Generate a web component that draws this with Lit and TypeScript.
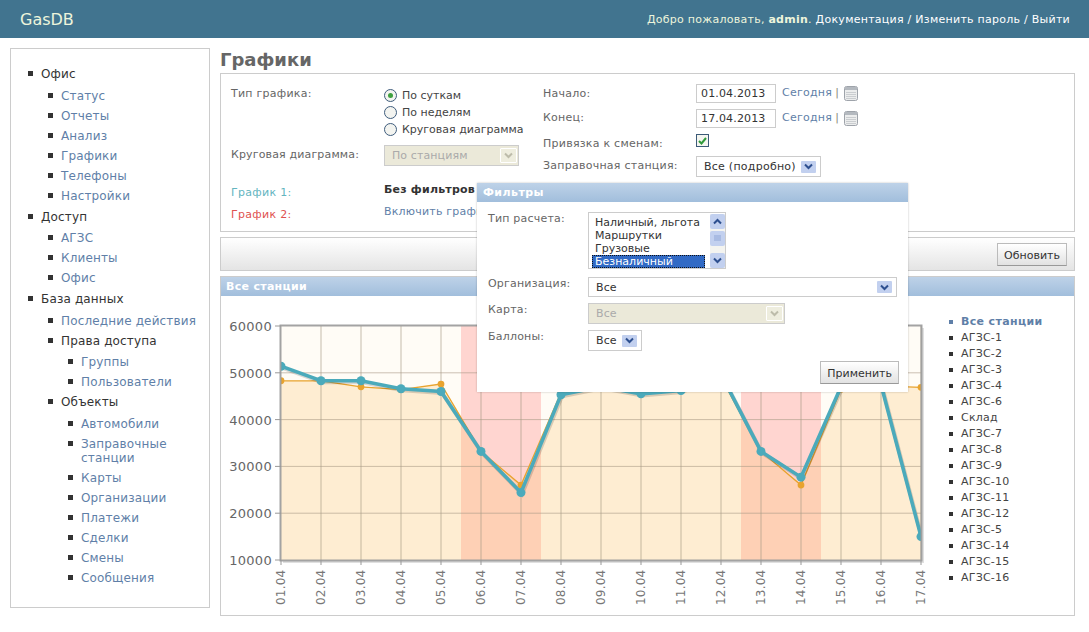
import { LitElement, html, css, svg } from "lit";
import { customElement } from "lit/decorators.js";

const X0 = 281, DX = 40, YT = 326, YB = 560;
const px = (i: number) => X0 + i * DX;
const py = (v: number) => YB - ((v - 10000) / 50000) * (YB - YT);
const teal = [51400, 48300, 48300, 46600, 46000, 33200, 24400, 45300, 47000, 45500, 46200, 49700, 33200, 27700, 47000, 47500, 15000];
const orange = [48300, 48300, 47000, 46400, 47600, 33200, 26000, 45800, 47000, 45800, 46200, 49000, 33200, 26000, 46500, 47200, 46900];
const dates = Array.from({ length: 17 }, (_, i) => String(i + 1).padStart(2, "0") + ".04");
const pts = (a: number[]) => a.map((v, i) => `${px(i)},${py(v).toFixed(1)}`).join(" ");

const ArrowBtn = (disabled = false) => html`<span class="arrow ${disabled ? "off" : ""}"><svg width="9" height="7" viewBox="0 0 9 7"><path d="M1 1.5 L4.5 5 L8 1.5" fill="none" stroke="${disabled ? "#bdbcaa" : "#2d4f8f"}" stroke-width="2"/></svg></span>`;
const Cal = () => html`<svg class="cal" width="14" height="15" viewBox="0 0 14 15"><rect x=".5" y=".5" width="13" height="14" rx="2" fill="#eceded" stroke="#9ea3aa"/><rect x="1" y="1" width="12" height="3" fill="#b4b9bf"/><path d="M2.5 6.5h9M2.5 8.5h9M2.5 10.5h9M2.5 12.5h9" stroke="#a9adb3" stroke-dasharray="1 1"/></svg>`;

@customElement("app-root")
export class AppRoot extends LitElement {
  static styles = css`
    :host { display: block; width: 1089px; height: 632px; position: relative; overflow: hidden; background: #fff; font: 11px "DejaVu Sans", sans-serif; color: #666; }
    a { color: #5f7fa8; text-decoration: none; }
    .top { height: 38px; background: #41748f; display: flex; justify-content: space-between; align-items: center; padding: 0 19px 0 20px; color: #edf5dc; }
    .logo { font-size: 16px; }
    .welcome { font-size: 11px; letter-spacing: .26px; }
    .welcome span { color: #fff; }
    .page { display: flex; align-items: flex-start; gap: 10px; padding: 10px 14px 0 10px; }
    .side { width: 198px; height: 558px; border: 1px solid #ccc; flex: none; font-size: 12px; letter-spacing: .15px; }
    ul { list-style: none; margin: 0; padding: 0; }
    .side > ul { padding: 16px 0 0 30px; }
    .side li { line-height: 18px; color: #333; position: relative; }
    .side li::before { content: ""; position: absolute; left: -13px; top: 6px; width: 5px; height: 5px; background: #333; }
    .side li > ul { padding: 3.6px 0 0 20px; }
    .side li li { margin-bottom: 2px; }
    .side li.g { margin-bottom: 3px; }
    .side li.multi { line-height: 14px; padding: 2px 0; }
    .side span { color: #333; }
    .main { flex: 1; min-width: 0; }
    h1 { font-size: 18px; line-height: 24px; margin: 0 0 1px; color: #666; font-weight: bold; }
    .box { border: 1px solid #ccc; }
    .form { height: 157px; display: grid; grid-template-columns: 153px 159px 153px 1fr; padding: 0 0 0 10px; position: relative; }
    .c1 { padding-top: 13px; line-height: 14px; letter-spacing: .25px; }
    .c2 { padding-top: 13px; display: flex; flex-direction: column; }
    .c3 { padding-top: 13px; display: flex; flex-direction: column; line-height: 14px; letter-spacing: .25px; }
    .c3 div:nth-child(2) { margin-top: 10px; }
    .c3 div:nth-child(3) { margin-top: 12px; }
    .c3 div:nth-child(4) { margin-top: 8px; }
    .c4 { padding-top: 10px; display: flex; flex-direction: column; gap: 6px; }
    .radio { display: flex; align-items: center; gap: 5px; height: 17px; color: #444; }
    .radio i { width: 11px; height: 11px; border: 1px solid #3f5d7d; border-radius: 50%; background: #f3f4f0; display: flex; align-items: center; justify-content: center; }
    .radio i b { width: 5px; height: 5px; border-radius: 50%; background: #3fa03f; }
    .sel { display: inline-flex; align-items: center; justify-content: space-between; box-sizing: border-box; border: 1px solid #ccc; background: #fff; height: 21px; padding: 0 4px 0 7px; color: #333; letter-spacing: .1px; }
    .sel.off { background: #ebe9d9; color: #aaa; }
    .w125 { width: 125px; margin-top: 3px; letter-spacing: .25px; }
    .w135 { width: 135px; }
    .w309 { width: 309px; height: 20px; }
    .w197 { width: 197px; }
    .w54 { width: 54px; }
    .arrow { width: 15px; height: 12px; background: #c2d0ef; display: flex; align-items: center; justify-content: center; border-radius: 1px; }
    .arrow.off { width: 17px; height: 15px; margin-right: -3px; background: #eeedde; border: 1px solid #fff; box-sizing: border-box; }
    .inp { display: inline-block; box-sizing: border-box; width: 80px; height: 19px; border: 1px solid #ccc; padding-left: 4px; color: #333; line-height: 18px; letter-spacing: .15px; }
    .today { letter-spacing: .25px; margin: 0 0 2px 0; }
    .dr { display: flex; align-items: center; gap: 6px; height: 19px; color: #8a8a7a; }
    .pipe { margin: 0 -1px 2px -3px; }
    .cal { margin-bottom: 1px; }
    .check { width: 11px; height: 11px; border: 1px solid #3c5a78; background: #f4f5ef; display: flex; align-items: center; justify-content: center; }
    .bar { height: 32px; margin-top: 5px; background: linear-gradient(#fff, #e4e4e4); display: flex; align-items: center; justify-content: flex-end; padding-right: 7px; }
    .btn { box-sizing: border-box; height: 23px; padding: 0 6px; border: 1px solid #bbb; border-bottom-color: #999; background: linear-gradient(#fff, #e2e2e2); color: #333; line-height: 23px; }
    .chart { margin-top: 5px; height: 338px; display: flex; flex-direction: column; }
    .head { height: 19px; line-height: 20px; padding-left: 5px; background: linear-gradient(#bed2e8, #a1bedc); color: #fff; font-weight: bold; letter-spacing: .3px; flex: none; }
    .legend { position: absolute; left: 961px; top: 314px; color: #444; letter-spacing: .2px; }
    .legend li { line-height: 16px; position: relative; }
    .legend li::before { content: ""; position: absolute; left: -12px; top: 6px; width: 4px; height: 4px; background: #333; }
    .legend li.on { font-weight: bold; color: #5f7fa8; letter-spacing: .35px; }
    .legend li.on::before { background: #5f7fa8; }
    .plot { position: absolute; left: 0; top: 0; pointer-events: none; }
    .modal { position: absolute; left: 477px; top: 183px; width: 431px; height: 209px; background: #fff; box-shadow: 0 0 2px rgba(0,0,0,.25); display: flex; flex-direction: column; }
    .modal .head { padding-left: 6px; letter-spacing: .45px; }
    .mbody { display: grid; grid-template-columns: 100px 1fr; padding: 10px 11px 0 11px; position: relative; flex: 1; align-content: start; justify-items: start; }
    .ml { letter-spacing: .2px; }
    .lb { width: 138px; height: 57px; border: 1px solid #ccc; box-sizing: border-box; display: flex; padding: 3px 0 1px 3px; color: #333; line-height: 13px; margin-bottom: 8px; }
    .opts { width: 113px; margin-top: 0; }
    .o { padding-left: 3px; height: 13px; white-space: nowrap; }
    .o.s { background: #316ac5; color: #fff; outline: 1px dotted #111; outline-offset: -1px; }
    .sb { width: 15px; margin: -2px 0 -1px 5px; display: flex; flex-direction: column; background: #f4f4f0; }
    .th { height: 15px; background: #c2d0ef; display: flex; align-items: center; justify-content: center; border-radius: 2px; }
    .th.mid { margin: 2px 0 auto; }
    .mrow { margin-bottom: 6px; }
    .apply { position: absolute; right: 9px; bottom: 8px; }
    .f { position: absolute; white-space: nowrap; }
    .pie { left: 10px; top: 74px; letter-spacing: .15px; }
    .pies { left: 163px; top: 71px; }
    .g1 { left: 10px; top: 112px; color: #64b5bf; letter-spacing: .3px; }
    .nof { left: 163px; top: 109px; color: #333; font-weight: bold; letter-spacing: .2px; }
    .g2 { left: 10px; top: 134px; color: #e0514f; letter-spacing: .3px; }
    .on2 { left: 163px; top: 131px; letter-spacing: .2px; }
  `;

  render() {
    return html`
      <div class="top"><div class="logo">GasDB</div>
        <div class="welcome">Добро пожаловать, <b>admin</b>. <span>Документация / Изменить пароль / Выйти</span></div></div>
      <div class="page">
        <nav class="side"><ul>
          <li class="g"><span>Офис</span><ul>
            ${["Статус","Отчеты","Анализ","Графики","Телефоны","Настройки"].map(t=>html`<li><a href="#">${t}</a></li>`)}</ul></li>
          <li class="g"><span>Доступ</span><ul>
            ${["АГЗС","Клиенты","Офис"].map(t=>html`<li><a href="#">${t}</a></li>`)}</ul></li>
          <li class="g"><span>База данных</span><ul>
            <li><a href="#">Последние действия</a></li>
            <li><span>Права доступа</span><ul>
              ${["Группы","Пользователи"].map(t=>html`<li><a href="#">${t}</a></li>`)}</ul></li>
            <li><span>Объекты</span><ul>
              ${["Автомобили","Заправочные станции","Карты","Организации","Платежи","Сделки","Смены","Сообщения"].map(t=>html`<li class="multi"><a href="#">${t}</a></li>`)}</ul></li>
          </ul></li>
        </ul></nav>
        <main class="main">
          <h1>Графики</h1>
          <section class="box form">
            <div class="c1">Тип графика:</div>
            <div class="c2">
              <div class="radio"><i><b></b></i>По суткам</div>
              <div class="radio"><i></i>По неделям</div>
              <div class="radio"><i></i>Круговая диаграмма</div>
            </div>
            <div class="c3">
              <div>Начало:</div><div>Конец:</div><div>Привязка к сменам:</div><div>Заправочная станция:</div>
            </div>
            <div class="c4">
              <div class="dr"><span class="inp">01.04.2013</span><a class="today" href="#">Сегодня</a><span class="pipe">|</span>${Cal()}</div>
              <div class="dr"><span class="inp">17.04.2013</span><a class="today" href="#">Сегодня</a><span class="pipe">|</span>${Cal()}</div>
              <div class="check"><svg width="9" height="8" viewBox="0 0 9 8"><path d="M1 4l2.5 2.5L8 1" fill="none" stroke="#2f9a3a" stroke-width="2"/></svg></div>
              <div class="sel w125">Все (подробно) ${ArrowBtn()}</div>
            </div>
            <div class="f pie">Круговая диаграмма:</div>
            <div class="sel off f pies w135">По станциям ${ArrowBtn(true)}</div>
            <div class="f g1">График 1:</div>
            <div class="f nof">Без фильтров</div>
            <div class="f g2">График 2:</div>
            <a class="f on2" href="#">Включить график</a>
          </section>
          <section class="box bar"><div class="btn">Обновить</div></section>
          <section class="box chart"><div class="head">Все станции</div></section>
        </main>
      </div>
      <svg class="plot" width="1089" height="632">
        <rect x="${X0}" y="${YT}" width="640" height="${YB - YT}" fill="#fffcf6"/>
        <rect x="461" y="${YT}" width="80" height="${YB - YT}" fill="#ffd5d0"/>
        <rect x="741" y="${YT}" width="80" height="${YB - YT}" fill="#ffd5d0"/>
        <clipPath id="c"><rect x="${X0}" y="${YT}" width="640" height="${YB - YT}"/></clipPath>
        <polygon points="${X0},${YB} ${pts(orange)} 921,${YB}" fill="#f9c060" fill-opacity=".24"/>
        ${[1,2,3,4].map(k => svg`<line x1="${X0}" x2="921" y1="${YT + k * 46.8}" y2="${YT + k * 46.8}" stroke="#a89a85" stroke-opacity=".6"/>`)}
        ${dates.slice(1).map((_, i) => svg`<line x1="${px(i+1)}" x2="${px(i+1)}" y1="${YT}" y2="${YB}" stroke="#a89a85" stroke-opacity=".65"/>`)}
        <path d="M${X0+2} ${YB+2}H923V${YT+2}" fill="none" stroke="#000" stroke-opacity=".12" stroke-width="2"/>
        <g clip-path="url(#c)">
        <polyline points="${pts(orange)}" fill="none" stroke="#e8a32e" stroke-width="1.3"/>
        ${orange.map((v,i)=>svg`<circle cx="${px(i)}" cy="${py(v)}" r="3.4" fill="#e8a32e"/>`)}
        <polyline points="${pts(teal)}" transform="translate(1,1.5)" fill="none" stroke="#000" stroke-opacity=".15" stroke-width="4"/>
        <polyline points="${pts(teal)}" fill="none" stroke="#4baabb" stroke-width="3.6"/>
        ${teal.map((v,i)=>svg`<circle cx="${px(i)}" cy="${py(v)}" r="4.5" fill="#4baabb"/>`)}
        </g>
        <rect x="${X0-0.5}" y="${YT-0.5}" width="641" height="${YB-YT+1}" fill="none" stroke="#999" stroke-width="2" stroke-opacity=".9"/>
        ${[60000,50000,40000,30000,20000,10000].map((v,k)=>svg`<line x1="275" x2="281" y1="${YT+k*46.8}" y2="${YT+k*46.8}" stroke="#999"/><text x="272" y="${YT+k*46.8+5}" text-anchor="end" font-size="13" fill="#666" font-family="DejaVu Sans" letter-spacing=".3">${v}</text>`)}
        ${dates.map((d,i)=>svg`<line x1="${px(i)}" x2="${px(i)}" y1="${YB}" y2="${YB+5}" stroke="#999"/><text transform="translate(${px(i)+4},605) rotate(-90)" font-size="12" fill="#777" font-family="DejaVu Sans" letter-spacing=".2">${d}</text>`)}
      </svg>
      <ul class="legend">
        <li class="on">Все станции</li>
        ${["АГЗС-1","АГЗС-2","АГЗС-3","АГЗС-4","АГЗС-6","Склад","АГЗС-7","АГЗС-8","АГЗС-9","АГЗС-10","АГЗС-11","АГЗС-12","АГЗС-5","АГЗС-14","АГЗС-15","АГЗС-16"].map(t=>html`<li>${t}</li>`)}
      </ul>
      <div class="modal">
        <div class="head">Фильтры</div>
        <div class="mbody">
          <div class="ml">Тип расчета:</div>
          <div class="lb"><div class="opts"><div class="o">Наличный, льгота</div><div class="o">Маршрутки</div><div class="o">Грузовые</div><div class="o s">Безналичный</div></div>
            <div class="sb">
              <div class="th"><svg width="9" height="7" viewBox="0 0 9 7"><path d="M1 5.5L4.5 2L8 5.5" fill="none" stroke="#2d4f8f" stroke-width="2"/></svg></div>
              <div class="th mid"><svg width="7" height="7" viewBox="0 0 7 7"><path d="M0 1h7M0 3h7M0 5h7" stroke="#8fa6d6"/></svg></div>
              <div class="th"><svg width="9" height="7" viewBox="0 0 9 7"><path d="M1 1.5L4.5 5L8 1.5" fill="none" stroke="#2d4f8f" stroke-width="2"/></svg></div>
            </div></div>
          <div class="ml">Организация:</div>
          <div class="sel w309 mrow">Все ${ArrowBtn()}</div>
          <div class="ml">Карта:</div>
          <div class="sel off w197 mrow">Все ${ArrowBtn(true)}</div>
          <div class="ml">Баллоны:</div>
          <div class="sel w54">Все ${ArrowBtn()}</div>
          <div class="btn apply">Применить</div>
        </div>
      </div>
    `;
  }
}
